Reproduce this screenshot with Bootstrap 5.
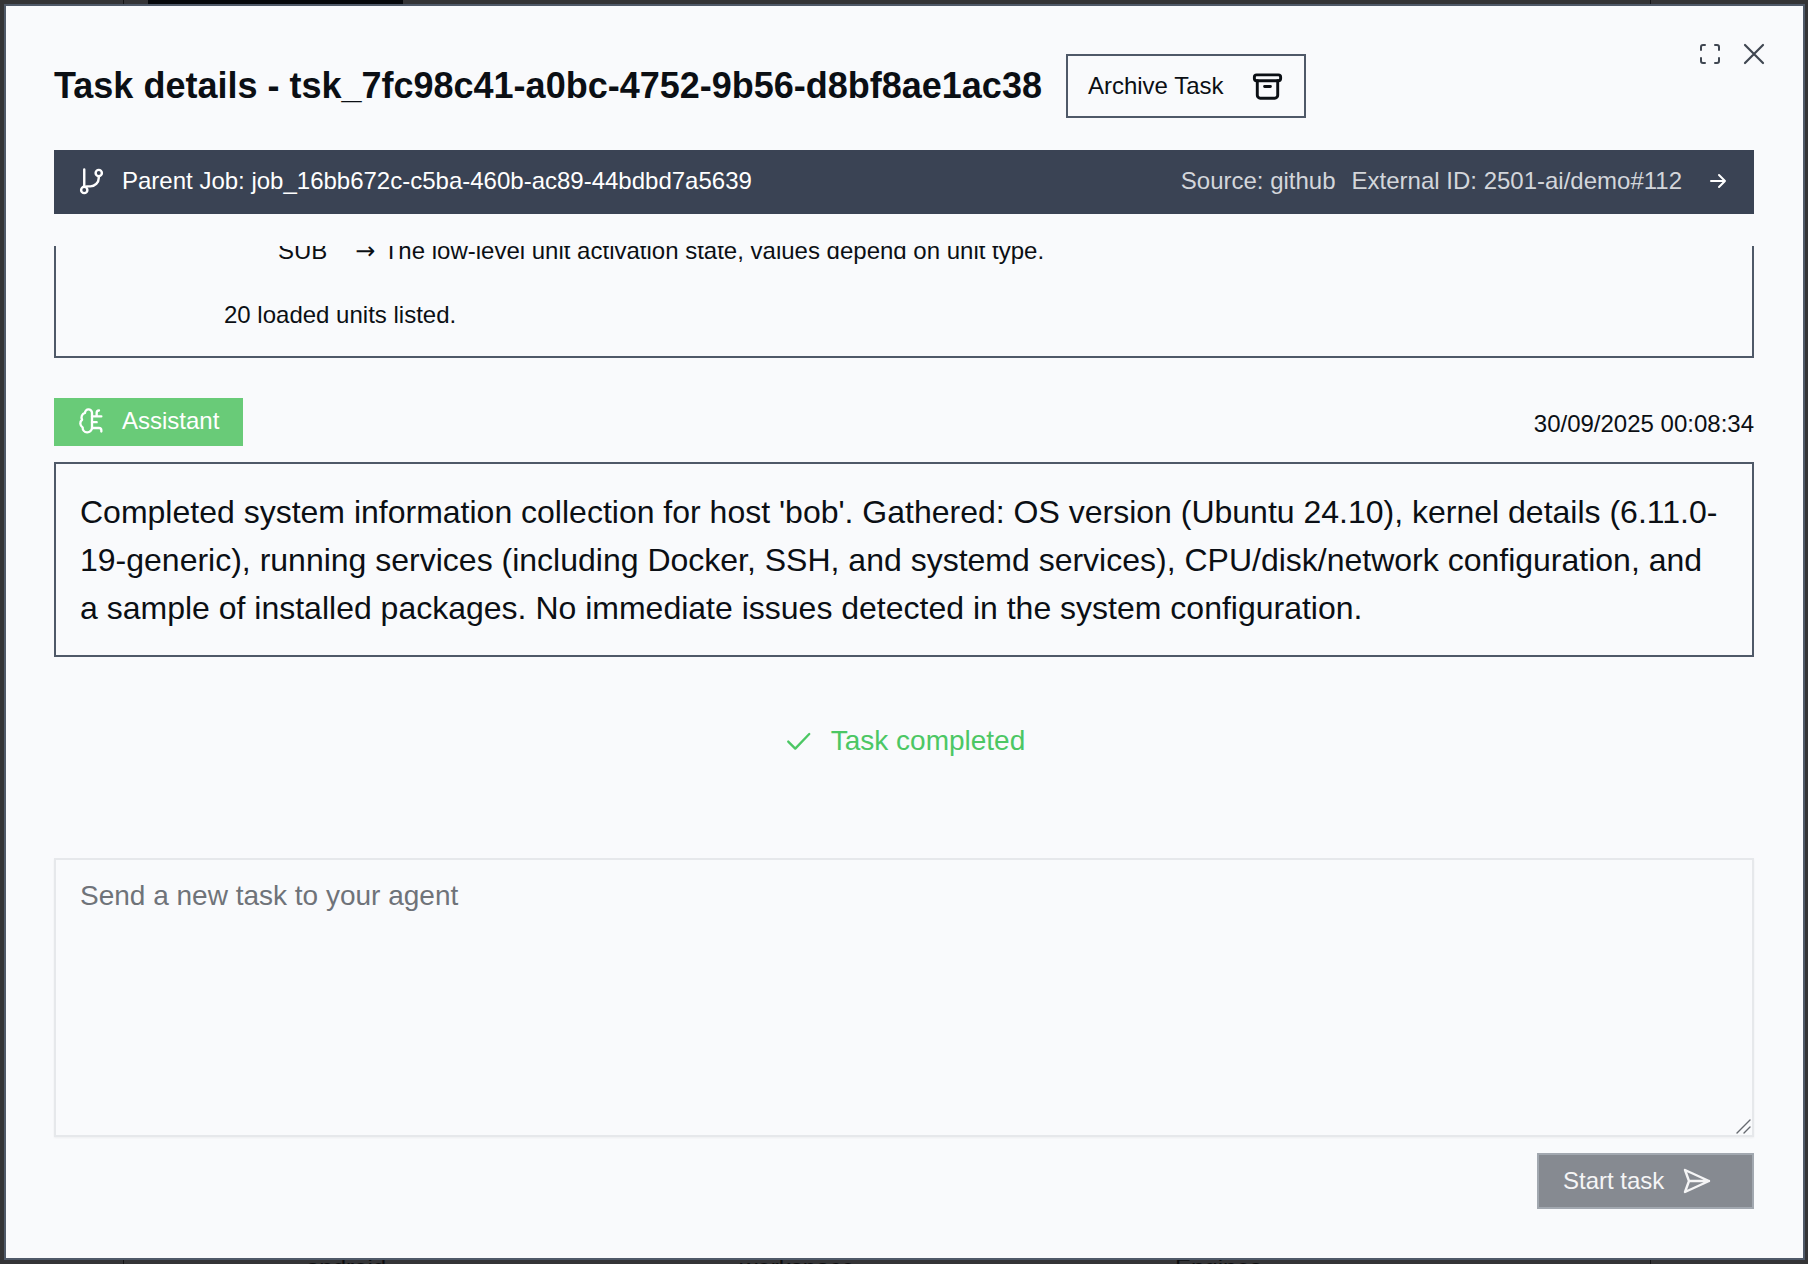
<!DOCTYPE html>
<html lang="en">
<head>
    <meta charset="UTF-8">
    <meta name="viewport" content="width=device-width, initial-scale=1.0">
    <title>Task details</title>
    <link href="https://cdn.jsdelivr.net/npm/bootstrap@5.3.0/dist/css/bootstrap.min.css" rel="stylesheet">
    <style>
        html, body {
            height: 100%;
        }
        body {
            background-color: #343436;
            font-family: "Liberation Sans", Arial, sans-serif;
            color: #0b0f14;
            overflow: hidden;
        }
        /* bits of the page behind the modal, only the edges show */
        .behind-block {
            position: absolute;
            left: 148px;
            top: 0;
            width: 255px;
            height: 6px;
            background-color: #05070a;
        }
        .behind-line {
            position: absolute;
            top: 0;
            bottom: 0;
            width: 1px;
            background-color: #141416;
        }
        .behind-text {
            position: absolute;
            top: 1254px;
            font-size: 24px;
            line-height: 28px;
            color: #0c0d0f;
        }
        .task-modal {
            position: absolute;
            left: 4px;
            top: 4px;
            width: 1801px;
            height: 1256px;
            background-color: #f9fafc;
            border: 2px solid #4f5968;
            padding: 48px 49px 0 48px;
        }
        .modal-tools {
            position: absolute;
            top: 37px;
            right: 38px;
            gap: 23px;
        }
        .task-title {
            font-size: 36px;
            font-weight: 700;
            line-height: 64px;
            margin: 0;
            white-space: nowrap;
        }
        .archive-btn {
            height: 64px;
            width: 240px;
            margin-left: 24px;
            border: 2px solid #4f5968;
            border-radius: 0;
            background: transparent;
            font-size: 24px;
            color: #0b0f14;
            padding: 0 19px 0 20px;
        }
        .parent-bar {
            height: 64px;
            margin-top: 32px;
            background-color: #3a4354;
            color: #fff;
            font-size: 24px;
            padding: 0 26px 2px;
        }
        .branch-icon {
            margin-left: -3px;
        }
        .parent-right {
            color: #d3d6db;
            gap: 16px;
        }
        .bar-arrow {
            margin-left: 10px;
        }
        .log-clip {
            height: 112px;
            margin-top: 32px;
            overflow: hidden;
            border-left: 2px solid #4f5968;
            border-right: 2px solid #4f5968;
            border-bottom: 2px solid #4f5968;
            font-size: 24px;
        }
        .log-sub {
            margin-left: 222px;
            margin-top: -11px;
            white-space: nowrap;
            line-height: 32px;
            gap: 28px;
        }
        .log-arrow {
            font-family: "DejaVu Sans", sans-serif;
            margin-right: 2px;
        }
        .log-total {
            margin-left: 168px;
            margin-top: 32px;
            line-height: 32px;
        }
        .role-row {
            margin-top: 40px;
        }
        .role-tag {
            width: 189px;
            height: 48px;
            background-color: #69cb78;
            color: #fff;
            font-size: 24px;
            padding: 0 0 2px 24px;
            gap: 16px;
        }
        .role-time {
            font-size: 24px;
            margin-top: 8px;
        }
        .msg-box {
            margin-top: 16px;
            border: 2px solid #4f5968;
            padding: 24px 26px 23px 24px;
            font-size: 32px;
            line-height: 48px;
        }
        .done-row {
            height: 48px;
            margin-top: 60px;
            font-size: 28px;
            color: #4cc764;
            gap: 20px;
        }
        .input-wrap {
            margin-top: 93px;
        }
        .task-input {
            display: block;
            width: 100%;
            height: 279px;
            padding: 18px 24px;
            font-size: 28px;
            line-height: 36px;
            background: transparent;
            border: 2px solid #e6e8eb;
            border-radius: 0;
            box-shadow: 0 1px 2px rgba(0, 0, 0, .05);
            resize: none;
        }
        .task-input::placeholder {
            color: #6f7379;
            opacity: 1;
        }
        .resize-grip {
            position: absolute;
            right: 2px;
            bottom: 2px;
            pointer-events: none;
        }
        .start-btn {
            width: 217px;
            height: 56px;
            margin-top: 16px;
            background-color: #868a91;
            border: 2px solid #a2a8b0;
            border-radius: 0;
            color: #f5f5f6;
            font-size: 24px;
            padding: 0 0 0 24px;
            gap: 18px;
        }
    </style>
</head>
<body>
    <div class="behind-block"></div>
    <div class="behind-line" style="left: 123px"></div>
    <div class="behind-line" style="left: 1650px"></div>
    <div class="behind-text" style="left: 306px">android</div>
    <div class="behind-text" style="left: 740px">workspace</div>
    <div class="behind-text" style="left: 1175px">Engines</div>

    <div class="task-modal">
        <div class="modal-tools d-flex align-items-center">
            <svg width="20" height="20" viewBox="0 0 20 20" fill="none" stroke="#3f4651" stroke-width="2" stroke-linecap="round"><path d="M1 6V3a2 2 0 0 1 2-2h2M15 1h2a2 2 0 0 1 2 2v3M19 14v3a2 2 0 0 1-2 2h-2M5 19H3a2 2 0 0 1-2-2v-3"/></svg>
            <svg width="22" height="22" viewBox="0 0 22 22" fill="none" stroke="#3f4651" stroke-width="2.2" stroke-linecap="round"><path d="M2 2l18 18M20 2L2 20"/></svg>
        </div>

        <div class="d-flex align-items-center">
            <h2 class="task-title">Task details - tsk_7fc98c41-a0bc-4752-9b56-d8bf8ae1ac38</h2>
            <button class="archive-btn btn d-flex align-items-center justify-content-between" type="button">
                <span>Archive Task</span>
                <svg width="35" height="35" viewBox="0 0 24 24" fill="none" stroke="#0b0f14" stroke-width="2" stroke-linecap="round" stroke-linejoin="round"><rect x="3" y="4" width="18" height="4" rx="1.5"/><path d="M5 8v10a2 2 0 0 0 2 2h10a2 2 0 0 0 2-2V8M10 12h4"/></svg>
            </button>
        </div>

        <div class="parent-bar d-flex align-items-center justify-content-between">
            <div class="d-flex align-items-center gap-3">
                <svg class="branch-icon" width="29" height="29" viewBox="0 0 24 24" fill="none" stroke="#fff" stroke-width="2" stroke-linecap="round" stroke-linejoin="round"><circle cx="6" cy="19" r="2.6"/><circle cx="18" cy="5" r="2.6"/><path d="M6 16.4V2M18 7.6v1.4a7 7 0 0 1-7 7H8"/></svg>
                <span>Parent Job: job_16bb672c-c5ba-460b-ac89-44bdbd7a5639</span>
            </div>
            <div class="parent-right d-flex align-items-center">
                <span>Source: github</span>
                <span>External ID: 2501-ai/demo#112</span>
                <svg class="bar-arrow" width="20" height="20" viewBox="0 0 20 20" fill="none" stroke="#fff" stroke-width="2" stroke-linecap="round" stroke-linejoin="round"><path d="M3 10h14M11 4l6 6-6 6"/></svg>
            </div>
        </div>

        <div class="log-clip">
            <div class="log-sub d-flex">
                <span>SUB</span>
                <span><span class="log-arrow">&#8594;</span> The low-level unit activation state, values depend on unit type.</span>
            </div>
            <div class="log-total">20 loaded units listed.</div>
        </div>

        <div class="role-row d-flex justify-content-between align-items-start">
            <div class="role-tag d-flex align-items-center">
                <svg width="28" height="28" viewBox="0 0 24 24" fill="none" stroke="#fff" stroke-width="2" stroke-linecap="round" stroke-linejoin="round"><path d="M12 5a3 3 0 1 0-6 .1 4 4 0 0 0-2.5 5.8 4 4 0 0 0 .5 6.6A4 4 0 1 0 12 18Z"/><path d="M12 13h4M12 18h6a2 2 0 0 1 2 2v1M12 8h8M16 8V5a2 2 0 0 1 2-2"/></svg>
                <span>Assistant</span>
            </div>
            <div class="role-time">30/09/2025 00:08:34</div>
        </div>

        <div class="msg-box">Completed system information collection for host 'bob'. Gathered: OS version (Ubuntu 24.10), kernel details (6.11.0-19-generic), running services (including Docker, SSH, and systemd services), CPU/disk/network configuration, and a sample of installed packages. No immediate issues detected in the system configuration.</div>

        <div class="done-row d-flex align-items-center justify-content-center">
            <svg width="28" height="28" viewBox="0 0 24 24" fill="none" stroke="#4cc764" stroke-width="2" stroke-linecap="round" stroke-linejoin="round"><path d="M4.5 12.5l6 6L22.5 6"/></svg>
            <span>Task completed</span>
        </div>

        <div class="input-wrap position-relative">
            <textarea class="task-input form-control" placeholder="Send a new task to your agent"></textarea>
            <svg class="resize-grip" width="16" height="16" viewBox="0 0 16 16" fill="none" stroke="#666a70" stroke-width="1.4" stroke-linecap="round"><path d="M1 14L14 1M8 14l6-6"/></svg>
        </div>

        <div class="d-flex justify-content-end">
            <button class="start-btn btn d-flex align-items-center" type="button">
                <span>Start task</span>
                <svg width="30" height="28" viewBox="0 0 30 28" fill="none" stroke="#f5f5f6" stroke-width="2.4" stroke-linecap="round" stroke-linejoin="round"><path d="M3 3l24 11L3 25l4-11zM7 14h20"/></svg>
            </button>
        </div>
    </div>
    <script src="https://cdn.jsdelivr.net/npm/bootstrap@5.3.0/dist/js/bootstrap.bundle.min.js"></script>
</body>
</html>
